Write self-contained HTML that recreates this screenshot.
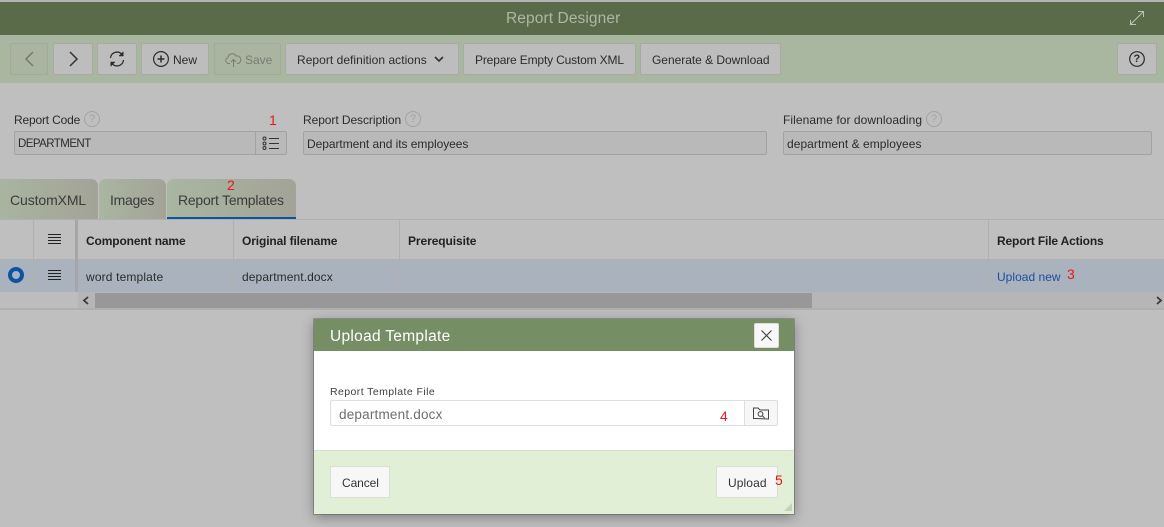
<!DOCTYPE html>
<html lang="en"><head><meta charset="utf-8"><title>Report Designer</title>
<style>
html,body{margin:0;padding:0;width:1164px;height:527px;overflow:hidden;background:#bfbfbf;font-family:"Liberation Sans",sans-serif;color:#2c2c2c}
.a{position:absolute;box-sizing:border-box}
.t{position:absolute;white-space:nowrap;line-height:16px}
.b{position:absolute;box-sizing:border-box;top:43px;height:32px;background:#bdbdbd;border:1px solid #a8aaa5;border-radius:2px}
.i{position:absolute;box-sizing:border-box;height:24px;top:131px;background:#b9b9b9;border:1px solid #a3a3a3;border-radius:2px}
.tab{position:absolute;box-sizing:border-box;top:179px;height:40px;border-radius:7px 7px 0 0;background:linear-gradient(90deg,#a9b6a0,#a3a398)}
.v{position:absolute;width:1px;background:#b0b0b0}
svg{position:absolute;overflow:visible}
.r{color:#e3191d;font-size:14px}
</style></head><body>
<div class="a" style="left:0;top:0;width:1164px;height:2px;background:#b4b4b4"></div>
<div class="a" style="left:0;top:2px;width:1164px;height:33px;background:#5a6b4a"></div>
<div class="t" style="left:506px;top:11px;font-size:15.500px;color:#aeb6a7;letter-spacing:.1px">Report Designer</div>
<svg style="left:1129px;top:10px" width="16" height="16" fill="none" stroke="#bcc2b6" stroke-width="1"><path d="M1 15 14 2M9 1.500H14.500V7M1.500 10V14.500H7"/></svg>
<div class="a" style="left:0;top:35px;width:1164px;height:48px;background:#a9b6a0"></div>

<div class="b" style="left:10px;width:38px;background:#a9b4a1;border-color:#a1aa9b"></div>
<svg style="left:24px;top:50px" width="12" height="18" fill="none" stroke="#727a6e" stroke-width="1.500"><path d="M9 2 2 9l7 7"/></svg>
<div class="b" style="left:53px;width:40px"></div>
<svg style="left:68px;top:50px" width="12" height="18" fill="none" stroke="#333" stroke-width="1.500"><path d="M2 2l7 7-7 7"/></svg>
<div class="b" style="left:97px;width:40px"></div>
<svg style="left:109px;top:51px" width="16" height="16" fill="none" stroke="#2c2c2c" stroke-width="1.300"><path d="M1.500 7A6.500 6.500 0 0 1 13 3.500M14.500 9A6.500 6.500 0 0 1 3 12.500"/><path d="M14 .8v4H10M2 15.200v-4H6" fill="#2c2c2c" stroke-width="1"/></svg>
<div class="b" style="left:141px;width:68px"></div>
<svg style="left:153px;top:51px" width="16" height="16" fill="none" stroke="#2c2c2c" stroke-width="1.200"><circle cx="8" cy="8" r="7.400"/><path d="M8 4.500v7M4.500 8h7" stroke-width="1.500"/></svg>
<div class="t" style="left:173px;top:52px;font-size:12px">New</div>
<div class="b" style="left:214px;width:67px;background:#a9b4a1;border-color:#a1aa9b"></div>
<svg style="left:225px;top:52px" width="17" height="16" fill="none" stroke="#767e72" stroke-width="1"><path d="M5 11.500H3.500A3 3 0 0 1 3 5.600 4.300 4.300 0 0 1 11 4a3.800 3.800 0 0 1 2 7.500h-1M8.500 15V8M6 10l2.500-2.500L11 10"/></svg>
<div class="t" style="left:245px;top:52px;font-size:12px;color:#767e72">Save</div>
<div class="b" style="left:285px;width:174px"></div>
<div class="t" style="left:297px;top:52px;font-size:12px;letter-spacing:.04px">Report definition actions</div>
<svg style="left:434px;top:56px" width="10" height="7" fill="none" stroke="#333" stroke-width="1.600"><path d="M1 1l4 4 4-4"/></svg>
<div class="b" style="left:463px;width:173px"></div>
<div class="t" style="left:475px;top:52px;font-size:12px;letter-spacing:-.16px">Prepare Empty Custom XML</div>
<div class="b" style="left:640px;width:141px"></div>
<div class="t" style="left:652px;top:52px;font-size:12px;letter-spacing:-.03px">Generate &amp; Download</div>
<div class="b" style="left:1117px;width:40px"></div>
<svg style="left:1129px;top:51px" width="16" height="16" fill="none" stroke="#2c2c2c" stroke-width="1.200"><circle cx="8" cy="8" r="7.300"/></svg>
<div class="t" style="left:1133.500px;top:51px;font-size:11px;font-weight:bold">?</div>

<div class="t" style="left:14px;top:112px;font-size:12px;letter-spacing:-.18px">Report Code</div>
<svg style="left:84px;top:111px" width="16" height="16" fill="none" stroke="#a3a3a3" stroke-width="1"><circle cx="8" cy="8" r="7.500"/></svg>
<div class="t" style="left:89px;top:111px;font-size:11px;color:#a3a3a3">?</div>
<div class="i" style="left:14px;width:273px"></div>
<div class="v" style="left:255px;top:132px;height:22px;background:#a3a3a3"></div>
<div class="t" style="left:18px;top:136px;font-size:11.500px;letter-spacing:-.55px">DEPARTMENT</div>
<svg style="left:262px;top:136px" width="18" height="15" fill="none" stroke="#333" stroke-width="1"><circle cx="2.500" cy="2.500" r="1.500"/><circle cx="2.500" cy="7.500" r="1.500"/><circle cx="2.500" cy="12" r="1.500"/><path d="M7 2.500h10M7 7.500h10M7 12.500h10"/></svg>
<div class="t r" style="left:269px;top:112px">1</div>

<div class="t" style="left:303px;top:112px;font-size:12px;letter-spacing:-.07px">Report Description</div>
<svg style="left:405px;top:111px" width="16" height="16" fill="none" stroke="#a3a3a3" stroke-width="1"><circle cx="8" cy="8" r="7.500"/></svg>
<div class="t" style="left:410px;top:111px;font-size:11px;color:#a3a3a3">?</div>
<div class="i" style="left:303px;width:464px"></div>
<div class="t" style="left:307px;top:136px;font-size:12px;letter-spacing:-.05px">Department and its employees</div>

<div class="t" style="left:783px;top:112px;font-size:12px;letter-spacing:.07px">Filename for downloading</div>
<svg style="left:926px;top:111px" width="16" height="16" fill="none" stroke="#a3a3a3" stroke-width="1"><circle cx="8" cy="8" r="7.500"/></svg>
<div class="t" style="left:931px;top:111px;font-size:11px;color:#a3a3a3">?</div>
<div class="i" style="left:783px;width:369px"></div>
<div class="t" style="left:787px;top:136px;font-size:12px;letter-spacing:.05px">department &amp; employees</div>

<div class="tab" style="left:-8px;width:106px"></div>
<div class="tab" style="left:99px;width:67px"></div>
<div class="tab" style="left:167px;width:129px;border-bottom:2px solid #0a54a4"></div>
<div class="t" style="left:10px;top:192px;font-size:14px;color:#3b3b3b;letter-spacing:-.1px">CustomXML</div>
<div class="t" style="left:110px;top:192px;font-size:14px;color:#3b3b3b;letter-spacing:-.3px">Images</div>
<div class="t" style="left:178px;top:192px;font-size:14px;color:#3b3b3b;letter-spacing:-.23px">Report Templates</div>
<div class="t r" style="left:227px;top:177px">2</div>

<div class="a" style="left:0;top:219px;width:1164px;height:1px;background:#b0b0b0"></div>
<div class="a" style="left:0;top:259px;width:1164px;height:1px;background:#b0b0b0"></div>
<div class="a" style="left:0;top:260px;width:1164px;height:32px;background:#a9b2bd"></div>
<div class="a" style="left:75px;top:220px;width:3px;height:72px;background:#a6a6a6"></div>
<div class="v" style="left:33px;top:220px;height:72px"></div>
<div class="v" style="left:233px;top:220px;height:72px"></div>
<div class="v" style="left:399px;top:220px;height:72px"></div>
<div class="v" style="left:988px;top:220px;height:72px"></div>
<svg style="left:48px;top:234px" width="13" height="11" stroke="#222" stroke-width="1"><path d="M0 .5h13M0 3.500h13M0 6.500h13M0 9.500h13"/></svg>
<svg style="left:48px;top:270px" width="13" height="11" stroke="#222" stroke-width="1"><path d="M0 .5h13M0 3.500h13M0 6.500h13M0 9.500h13"/></svg>
<svg style="left:8px;top:267px" width="16" height="16" fill="none"><circle cx="8" cy="8" r="6" stroke="#0a54a4" stroke-width="4"/></svg>
<div class="t" style="left:86px;top:233px;font-size:12px;font-weight:bold;color:#222;letter-spacing:-.13px">Component name</div>
<div class="t" style="left:242px;top:233px;font-size:12px;font-weight:bold;color:#222;letter-spacing:-.12px">Original filename</div>
<div class="t" style="left:408px;top:233px;font-size:12px;font-weight:bold;color:#222;letter-spacing:-.08px">Prerequisite</div>
<div class="t" style="left:997px;top:233px;font-size:12px;font-weight:bold;color:#222;letter-spacing:-.16px">Report File Actions</div>
<div class="t" style="left:86px;top:269px;font-size:12px;letter-spacing:.15px">word template</div>
<div class="t" style="left:242px;top:269px;font-size:12px;letter-spacing:.1px">department.docx</div>
<div class="t" style="left:997px;top:269px;font-size:12px;color:#1d4f9c;letter-spacing:.02px">Upload new</div>
<div class="t r" style="left:1067px;top:266px">3</div>

<div class="a" style="left:0;top:292px;width:78px;height:16px;background:#bdbdbd"></div>
<div class="a" style="left:78px;top:292px;width:1086px;height:16px;background:#b6b6b6"></div>
<div class="a" style="left:95px;top:293px;width:717px;height:15px;background:#989898"></div>
<svg style="left:82px;top:296px" width="8" height="9" fill="none" stroke="#3a3a3a" stroke-width="1.800"><path d="M6 1 2 4.500 6 8"/></svg>
<svg style="left:1155px;top:296px" width="8" height="9" fill="none" stroke="#3a3a3a" stroke-width="1.800"><path d="M2 1l4 3.500L2 8"/></svg>
<div class="a" style="left:0;top:308px;width:1164px;height:2px;background:#b0b0b0"></div>

<div class="a" style="left:314px;top:319px;width:480px;height:195px;background:#fff;box-shadow:0 3px 12px rgba(0,0,0,.35),0 0 0 1px rgba(80,80,80,.35)"></div>
<div class="a" style="left:314px;top:319px;width:480px;height:32px;background:#768e64"></div>
<div class="t" style="left:330px;top:329px;font-size:15.500px;color:#fff;letter-spacing:.3px">Upload Template</div>
<div class="a" style="left:754px;top:323px;width:25px;height:25px;background:#f7f7f7;border:1px solid #dcdcdc;border-radius:2px"></div>
<svg style="left:761px;top:330px" width="11" height="11" fill="none" stroke="#3c3c3c" stroke-width="1.100"><path d="M.5.500l10 10M10.500.500l-10 10"/></svg>
<div class="t" style="left:330px;top:384px;font-size:10.500px;color:#404040;letter-spacing:.42px">Report Template File</div>
<div class="a" style="left:330px;top:400px;width:448px;height:26px;background:#fff;border:1px solid #dedede;border-radius:2px"></div>
<div class="a" style="left:744px;top:401px;width:33px;height:24px;background:#f7f7f7;border-left:1px solid #dedede"></div>
<div class="t" style="left:339px;top:407px;font-size:13.500px;color:#6e6e6e;letter-spacing:.2px">department.docx</div>
<svg style="left:753px;top:407px" width="16" height="13" fill="none" stroke="#444" stroke-width="1"><path d="M.5 11.500V1H5L7 3h8.500v9L3 11.500z"/><circle cx="7.500" cy="7" r="2.400"/><path d="M9.300 8.700l2.300 2.300"/></svg>
<div class="t r" style="left:720px;top:408px">4</div>
<div class="a" style="left:314px;top:450px;width:480px;height:64px;background:#e0efd5;border-top:1px solid #d5dfcf"></div>
<div class="a" style="left:330px;top:466px;width:60px;height:32px;background:#f7f7f7;border:1px solid #d9dfd6;border-radius:2px"></div>
<div class="t" style="left:342px;top:475px;font-size:12px;color:#333;letter-spacing:-.1px">Cancel</div>
<div class="a" style="left:716px;top:466px;width:62px;height:32px;background:#f7f7f7;border:1px solid #d9dfd6;border-radius:2px"></div>
<div class="t" style="left:728px;top:475px;font-size:12px;color:#333;letter-spacing:.1px">Upload</div>
<div class="t r" style="left:775px;top:472px">5</div>
<svg style="left:784px;top:503px" width="9" height="9"><path d="M8 0V8H0z" fill="#c5d0bd"/></svg>
</body></html>
